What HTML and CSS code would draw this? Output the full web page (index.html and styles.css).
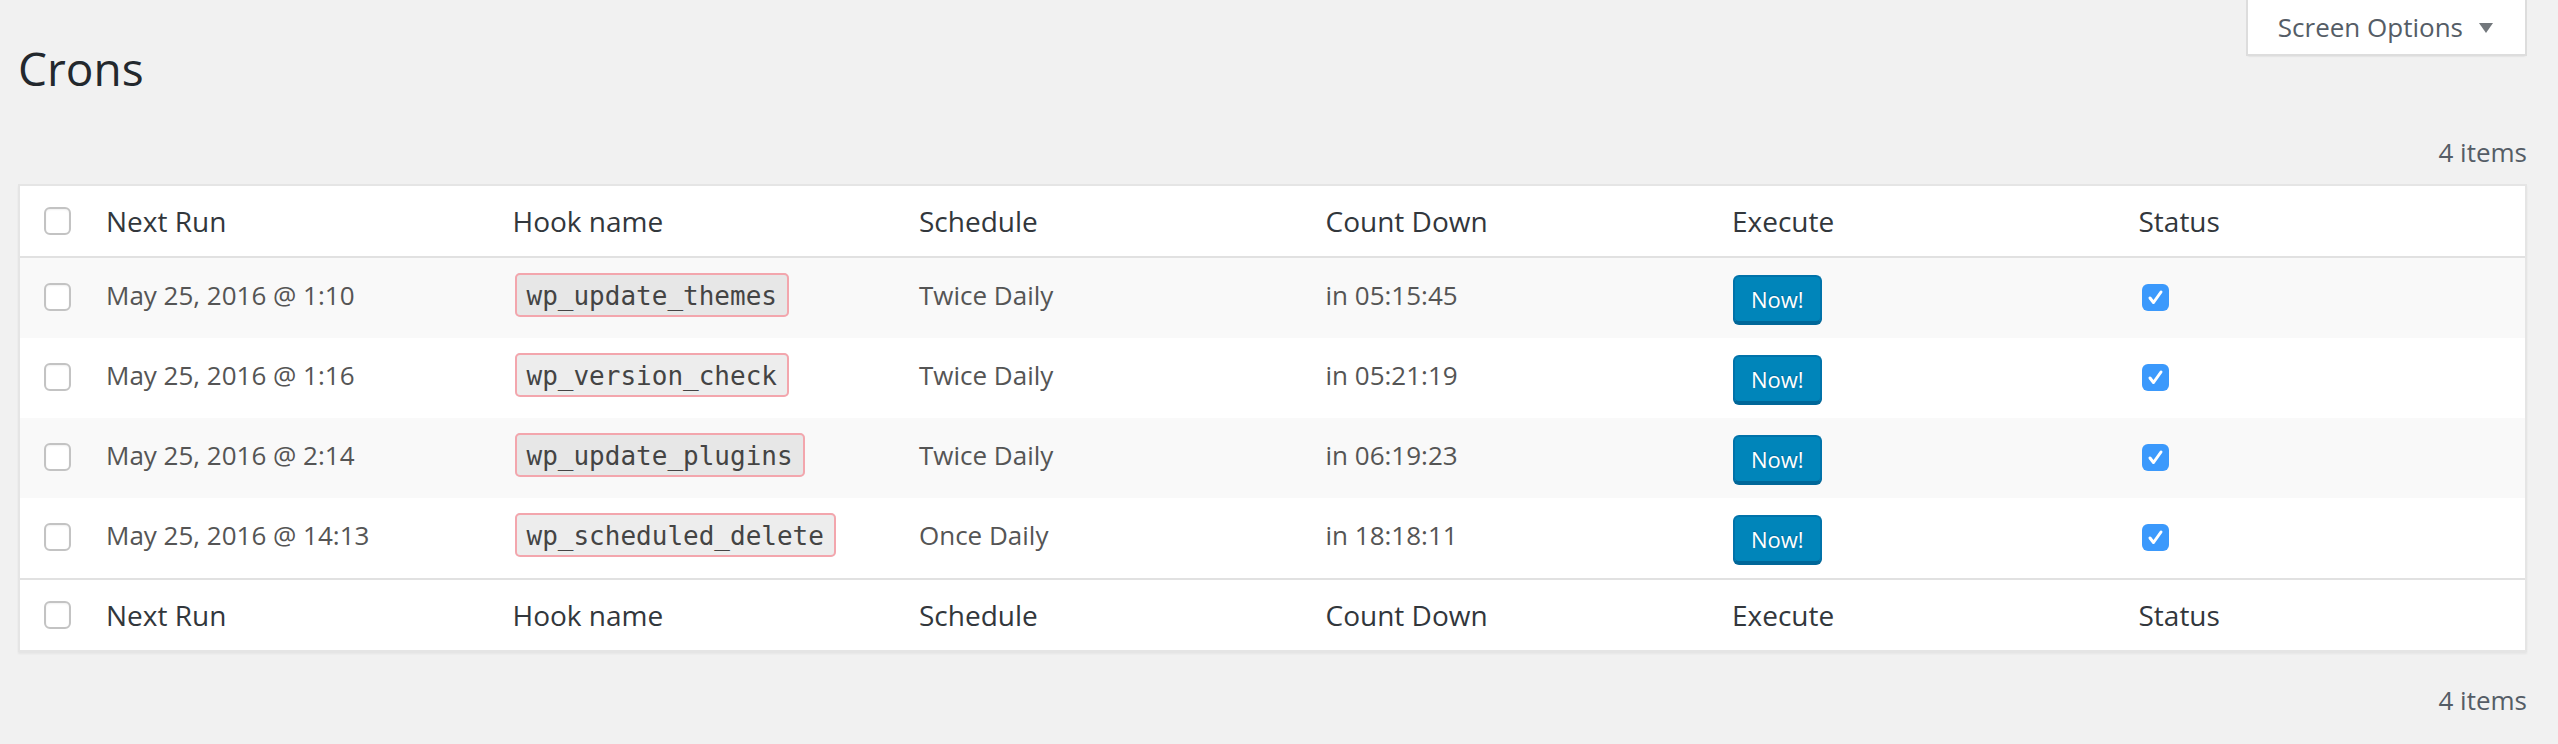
FILE: index.html
```html
<!DOCTYPE html>
<html lang="en">
<head>
<meta charset="utf-8">
<title>Crons</title>
<link rel="stylesheet" href="styles.css">
</head>
<body>
<div class="page">
  <div class="screen-meta-links">
    <button class="show-settings" type="button">Screen Options<svg class="arrow" width="14" height="10" viewBox="0 0 14 10"><path d="M0 0H14L7 10Z" fill="#72777c"/></svg></button>
  </div>
  <div class="wrap">
    <h1 class="title">Crons</h1>
    <div class="tablenav"><span class="displaying-num">4 items</span></div>
    <table class="list">
      <colgroup>
        <col class="col-check">
        <col><col><col><col><col><col>
      </colgroup>
      <thead>
        <tr>
          <th class="check"><span class="cb"></span></th>
          <th>Next Run</th>
          <th>Hook name</th>
          <th>Schedule</th>
          <th>Count Down</th>
          <th>Execute</th>
          <th>Status</th>
        </tr>
      </thead>
      <tbody>
        <tr class="alt">
          <td class="check"><span class="cb"></span></td>
          <td>May 25, 2016 @ 1:10</td>
          <td><code class="hook">wp_update_themes</code></td>
          <td>Twice Daily</td>
          <td>in 05:15:45</td>
          <td class="exec"><button class="now" type="button">Now!</button></td>
          <td class="status"><span class="on"><svg width="27" height="27" viewBox="0 0 27 27"><path d="M8 14L11.5 18.5L19 8" fill="none" stroke="#fff" stroke-width="3" stroke-linecap="round" stroke-linejoin="round"/></svg></span></td>
        </tr>
        <tr>
          <td class="check"><span class="cb"></span></td>
          <td>May 25, 2016 @ 1:16</td>
          <td><code class="hook">wp_version_check</code></td>
          <td>Twice Daily</td>
          <td>in 05:21:19</td>
          <td class="exec"><button class="now" type="button">Now!</button></td>
          <td class="status"><span class="on"><svg width="27" height="27" viewBox="0 0 27 27"><path d="M8 14L11.5 18.5L19 8" fill="none" stroke="#fff" stroke-width="3" stroke-linecap="round" stroke-linejoin="round"/></svg></span></td>
        </tr>
        <tr class="alt">
          <td class="check"><span class="cb"></span></td>
          <td>May 25, 2016 @ 2:14</td>
          <td><code class="hook">wp_update_plugins</code></td>
          <td>Twice Daily</td>
          <td>in 06:19:23</td>
          <td class="exec"><button class="now" type="button">Now!</button></td>
          <td class="status"><span class="on"><svg width="27" height="27" viewBox="0 0 27 27"><path d="M8 14L11.5 18.5L19 8" fill="none" stroke="#fff" stroke-width="3" stroke-linecap="round" stroke-linejoin="round"/></svg></span></td>
        </tr>
        <tr>
          <td class="check"><span class="cb"></span></td>
          <td>May 25, 2016 @ 14:13</td>
          <td><code class="hook">wp_scheduled_delete</code></td>
          <td>Once Daily</td>
          <td>in 18:18:11</td>
          <td class="exec"><button class="now" type="button">Now!</button></td>
          <td class="status"><span class="on"><svg width="27" height="27" viewBox="0 0 27 27"><path d="M8 14L11.5 18.5L19 8" fill="none" stroke="#fff" stroke-width="3" stroke-linecap="round" stroke-linejoin="round"/></svg></span></td>
        </tr>
      </tbody>
      <tfoot>
        <tr>
          <th class="check"><span class="cb"></span></th>
          <th>Next Run</th>
          <th>Hook name</th>
          <th>Schedule</th>
          <th>Count Down</th>
          <th>Execute</th>
          <th>Status</th>
        </tr>
      </tfoot>
    </table>
    <div class="tablenav bottom"><span class="displaying-num">4 items</span></div>
  </div>
</div>
</body>
</html>
```
FILE: styles.css
```css
html, body {
  margin: 0;
  padding: 0;
}
body {
  background: #f1f1f1;
  font-family: "Open Sans", "Liberation Sans", sans-serif;
  color: #444;
}
.page {
  padding: 0 31px 0 18px;
}
.screen-meta-links {
  float: right;
}
.show-settings {
  display: flex;
  align-items: center;
  height: 56px;
  box-sizing: border-box;
  margin: 0;
  padding: 0 32px 0 30px;
  background: #fff;
  border: 2px solid #ddd;
  border-top: none;
  box-shadow: 0 2px 2px -2px rgba(0, 0, 0, 0.15);
  font-family: "Open Sans", "Liberation Sans", sans-serif;
  font-size: 26px;
  line-height: 52px;
  color: #555d66;
}
.arrow {
  margin-left: 16px;
  margin-top: 2px;
}
.wrap {
  padding-top: 20px;
}
.title {
  margin: 0;
  padding: 18px 0 8px;
  font-size: 46px;
  font-weight: 400;
  line-height: 60px;
  color: #23282d;
}
.tablenav {
  padding: 28px 0 14px;
  text-align: right;
  font-size: 26px;
  line-height: 36px;
  color: #555d66;
}
.tablenav.bottom {
  padding: 30px 0 0;
}
.list {
  width: 100%;
  table-layout: fixed;
  border-spacing: 0;
  border: 2px solid #e5e5e5;
  background: #fff;
  box-shadow: 0 2px 2px rgba(0, 0, 0, 0.05);
}
.col-check {
  width: 66px;
}
.list th {
  padding: 0 20px;
  text-align: left;
  font-weight: 400;
  font-size: 28px;
  line-height: 38px;
  color: #32373c;
  vertical-align: middle;
}
.list thead tr,
.list tfoot tr {
  height: 72px;
}
.list thead th {
  border-bottom: 2px solid #e1e1e1;
}
.list tfoot th {
  border-top: 2px solid #e1e1e1;
}
.list tbody tr {
  height: 80px;
}
.list tbody tr.alt {
  background: #f9f9f9;
}
.list td {
  padding: 18px 20px 0;
  font-size: 26px;
  line-height: 38px;
  color: #555;
  vertical-align: top;
  white-space: nowrap;
}
.list .check {
  padding: 0;
}
.list td.check {
  padding-top: 25px;
}
.cb {
  display: block;
  width: 27px;
  height: 28px;
  box-sizing: border-box;
  margin-left: 24px;
  background: #fff;
  border: 2px solid #c3c3c3;
  border-radius: 6px;
  box-shadow: inset 0 1px 2px rgba(0, 0, 0, 0.06);
}
.hook {
  font-family: "DejaVu Sans Mono", "Liberation Mono", monospace;
  font-size: 26px;
  padding: 6px 10px 4px;
  margin-left: 2px;
  background: rgba(0, 0, 0, 0.07);
  border: 2px solid #f3a6ad;
  border-radius: 5px;
  color: #444;
}
.list td.exec {
  padding-top: 17px;
}
.now {
  display: block;
  height: 48px;
  box-sizing: border-box;
  margin: 0 0 0 1px;
  padding: 0 16px;
  background: #0085ba;
  border: 2px solid #0073aa;
  border-bottom-color: #006799;
  border-radius: 6px;
  box-shadow: 0 2px 0 #006799;
  font-family: "Open Sans", "Liberation Sans", sans-serif;
  font-size: 22px;
  line-height: 44px;
  color: #fff;
  text-shadow: 0 -1px 1px #006799;
}
.list td.status {
  padding-top: 26px;
}
.on {
  display: block;
  width: 27px;
  height: 27px;
  margin-left: 3px;
  background: #3b99fc;
  border-radius: 6px;
}
.on svg {
  display: block;
}
```
